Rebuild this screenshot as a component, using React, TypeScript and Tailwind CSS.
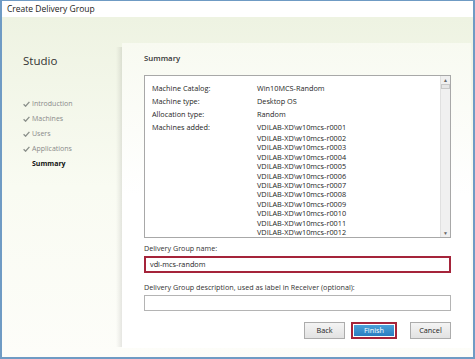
import React from "react";

const machines = Array.from({ length: 12 }, (_, i) => `VDILAB-XD\\w10mcs-r${String(i + 1).padStart(4, "0")}`);

function Check() {
  return (
    <svg width="7" height="6" viewBox="0 0 7 6" className="mr-[2px]">
      <path d="M0.6 3.2 L2.6 5.2 L6.4 0.8" fill="none" stroke="#8a8f8a" strokeWidth="1.3" />
    </svg>
  );
}

export default function App() {
  const font = { fontFamily: '"Open Sans", "Noto Sans", sans-serif' };
  return (
    <div className="w-[475px] h-[359px] bg-white overflow-hidden" style={font}>
      <div className="h-full flex flex-col border-x-2 border-b-2 border-t border-[#6f9bc4]">
        <div className="h-[16px] bg-white flex items-center pl-[5px] text-[8.5px] text-[#222]">Create Delivery Group</div>
        <div className="flex-1 flex bg-gradient-to-b from-[#eef3e2] via-[#f9fbf2] to-[#fdfdf9]">
          <div className="w-[114px] flex flex-col pl-[21px]">
            <div className="mt-[37px] text-[11.5px] text-[#333] leading-[14px]">Studio</div>
            <div className="mt-[30px] flex flex-col gap-[4px] text-[7px] leading-[11px] text-[#8a8a8a]">
              {["Introduction", "Machines", "Users", "Applications"].map((t) => (
                <div key={t} className="flex items-center">
                  <Check />
                  <span>{t}</span>
                </div>
              ))}
              <div className="pl-[9px] font-bold text-[#111]">Summary</div>
            </div>
          </div>
          <div className="w-[6px] mt-[30px] mb-[10px] bg-gradient-to-r from-transparent to-[rgba(0,0,0,0.09)]" />
          <div className="flex-1 mt-[26px] mb-[9px] mr-[2px] bg-gradient-to-b from-[#f8faf1] via-white to-white flex flex-col pl-[22px] pr-[20px]">
            <div className="mt-[9px] text-[7.8px] text-[#333] leading-[12px] font-semibold">Summary</div>
            <div className="mt-[11px] h-[163px] border border-[#a8a8a8] bg-white flex">
              <div className="flex-1 pl-[7px] pt-[6px] text-[7.3px] text-[#1e1e1e]">
                {[
                  ["Machine Catalog:", "Win10MCS-Random"],
                  ["Machine type:", "Desktop OS"],
                  ["Allocation type:", "Random"],
                ].map(([a, b]) => (
                  <div key={a} className="flex h-[13px] items-center">
                    <span className="w-[105px]">{a}</span>
                    <span>{b}</span>
                  </div>
                ))}
                <div className="flex">
                  <span className="w-[105px] leading-[13px]">Machines added:</span>
                  <div className="flex flex-col">
                    {machines.map((m, i) => (
                      <span key={m} className={i === 0 ? "leading-[13px] h-[13px]" : "leading-[9.4px] h-[9.4px]"}>{m}</span>
                    ))}
                  </div>
                </div>
              </div>
              <div className="w-[10px] bg-[#f0f0f0] border-l border-[#e0e0e0] flex flex-col items-center">
                <div className="h-[8px] text-[5px] leading-[8px] text-[#666]">▲</div>
                <div className="w-[9px] h-[5px] border border-[#c8c8c8] bg-[#e6e6e6]" />
                <div className="flex-1" />
                <div className="h-[8px] text-[5px] leading-[8px] text-[#666]">▼</div>
              </div>
            </div>
            <div className="mt-[4px] text-[7.2px] text-[#333] leading-[12px]">Delivery Group name:</div>
            <div className="mt-[2px] h-[17px] border-2 border-[#a5243a] bg-white flex items-center pl-[4px] text-[7.3px] text-[#1e1e1e]">vdi-mcs-random</div>
            <div className="mt-[8px] text-[7.2px] text-[#333] leading-[12px]">Delivery Group description, used as label in Receiver (optional):</div>
            <div className="mt-[2px] h-[16px] border border-[#b4b4b4] bg-white" />
            <div className="mt-[11px] flex justify-end text-[7.3px]">
              <div className="w-[41px] h-[17px] border border-[#acacac] bg-gradient-to-b from-[#f4f4f4] to-[#e2e2e2] flex items-center justify-center text-[#222]">Back</div>
              <div className="ml-[6px] w-[46px] h-[17px] border-2 border-[#a5243a] p-[1px] bg-white">
                <div className="w-full h-full bg-gradient-to-b from-[#4aa0d8] to-[#2a7dc0] flex items-center justify-center text-white">Finish</div>
              </div>
              <div className="ml-[13px] w-[41px] h-[17px] border border-[#acacac] bg-gradient-to-b from-[#f4f4f4] to-[#e2e2e2] flex items-center justify-center text-[#222]">Cancel</div>
            </div>
          </div>
        </div>
      </div>
    </div>
  );
}
